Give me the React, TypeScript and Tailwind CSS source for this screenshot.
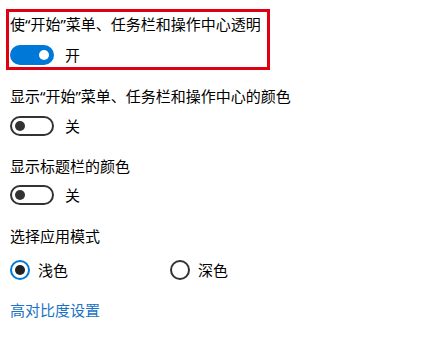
import { ReactNode } from 'react'

const FONT = "font-['Microsoft_YaHei','Noto_Sans','Noto_Sans_CJK_SC',sans-serif]"

function Toggle({ on, label }: { on: boolean; label: string }) {
  return (
    <div className="flex items-center h-[20px]">
      {on ? (
        <div className="w-[44px] h-[20px] rounded-full bg-[#0078d7] flex items-center justify-end pr-[5px]">
          <div className="w-[10px] h-[10px] rounded-full bg-white" />
        </div>
      ) : (
        <div className="w-[44px] h-[20px] rounded-full border-2 border-[#333] flex items-center pl-[3px]">
          <div className="w-[10px] h-[10px] rounded-full bg-[#333]" />
        </div>
      )}
      <span className="ml-[11px] text-[15px] leading-[20px] text-black">{label}</span>
    </div>
  )
}

function Radio({ checked, label }: { checked: boolean; label: string }) {
  return (
    <div className="flex items-center h-[20px]">
      <div
        className={`w-[20px] h-[20px] rounded-full border-2 flex items-center justify-center ${
          checked ? 'border-[#0078d7]' : 'border-[#333]'
        }`}
      >
        {checked && <div className="w-[10px] h-[10px] rounded-full bg-[#222]" />}
      </div>
      <span className="ml-[8px] text-[15px] leading-[20px] text-black">{label}</span>
    </div>
  )
}

function Label({ children }: { children: ReactNode }) {
  return <div className="text-[15px] leading-[20px] text-black whitespace-nowrap">{children}</div>
}

export default function App() {
  return (
    <div className={`w-[423px] h-[348px] bg-white overflow-hidden pt-[9px] ${FONT}`}>
      <div className="ml-[6px] w-[264px] h-[61px] border-[3px] border-[#e00012] pt-[2px] pl-[1px]">
        <Label>使“开始”菜单、任务栏和操作中心透明</Label>
        <div className="mt-[11px]">
          <Toggle on label="开" />
        </div>
      </div>

      <div className="pl-[10px]">
        <div className="mt-[16px]">
          <Label>显示“开始”菜单、任务栏和操作中心的颜色</Label>
        </div>
        <div className="mt-[10px]">
          <Toggle on={false} label="关" />
        </div>

        <div className="mt-[20px]">
          <Label>显示标题栏的颜色</Label>
        </div>
        <div className="mt-[9px]">
          <Toggle on={false} label="关" />
        </div>

        <div className="mt-[21px]">
          <Label>选择应用模式</Label>
        </div>
        <div className="mt-[14px] flex">
          <div className="w-[160px]">
            <Radio checked label="浅色" />
          </div>
          <Radio checked={false} label="深色" />
        </div>

        <div className="mt-[20px] text-[15px] leading-[20px] text-[#1a73c5]">高对比度设置</div>
      </div>
    </div>
  )
}
